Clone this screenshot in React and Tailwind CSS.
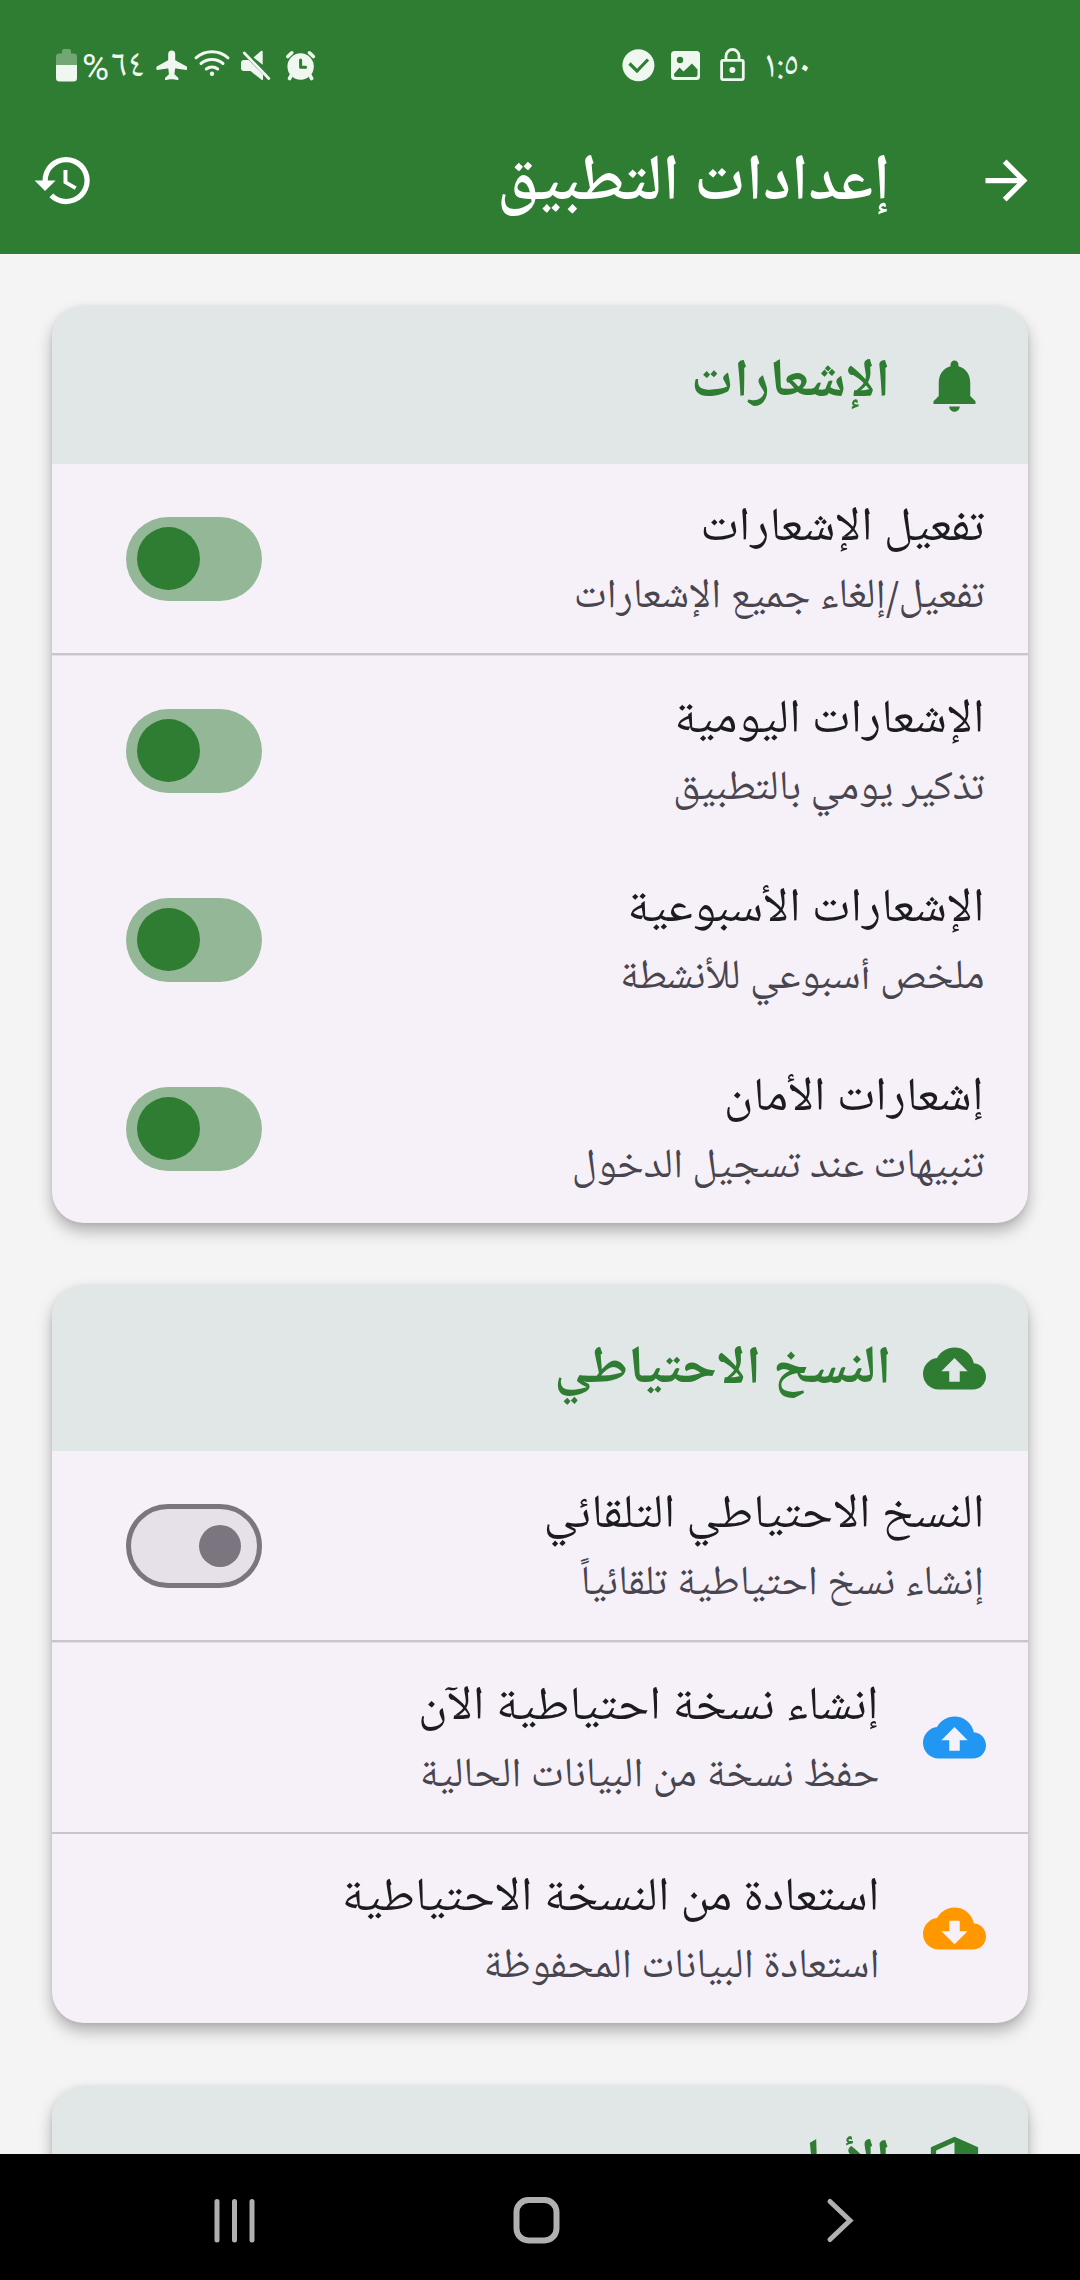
import React from "react";
import {
  MdArrowForward,
  MdHistory,
  MdNotifications,
  MdCloudUpload,
  MdCloudDownload,
  MdSecurity,
} from "react-icons/md";

function StatusBar() {
  return (
    <div dir="ltr" className="flex h-[106px] items-start pt-[46px] text-[#f0f7f0]">
      <svg className="ml-[54px] h-[38px] w-[26px]" viewBox="54 46 26 38" fill="currentColor">
        <path opacity="0.35" d="M62 51q0-2 2-2h5q2 0 2 2v2.600h3q3 0 3 3V65H56v-8.400q0-3 3-3h3z" />
        <path d="M56 65h21v13q0 3.500-3.500 3.500h-14Q56 81.500 56 78z" />
      </svg>
      <span className="ml-[2px] flex w-[66px] items-start gap-[2px] whitespace-nowrap leading-[38px]">
        <span className="pt-[3px] font-['Roboto',sans-serif] text-[37px]">%</span>
        <span className="pt-px font-['Noto_Naskh_Arabic_UI',serif] text-[38.500px]">٦٤</span>
      </span>
      <svg className="ml-[6px] h-[38px] w-[36px]" viewBox="154 46 36 38" fill="currentColor" stroke="currentColor" strokeWidth="1.400" strokeLinejoin="round">
        <path d="M168.900 54q0-2.800 2.800-2.800t2.800 2.800v6.500l11.800 6.500v2.200l-11.800-1.600-.8 7 4 3.600v1.200l-6-1.200-6 1.200v-1.200l4-3.600-.8-7-11.800 1.600v-2.200l11.800-6.500z" />
      </svg>
      <svg className="ml-[2px] h-[38px] w-[40px]" viewBox="192 46 40 38" fill="none" stroke="currentColor" strokeWidth="3" strokeLinecap="round">
        <path d="M196 57.800a24 24 0 0 1 32 0M201 63.500a17 17 0 0 1 22 0M206.300 69a9.500 9.500 0 0 1 11.400 0" />
        <circle cx="212" cy="73.700" r="2.200" fill="currentColor" stroke="none" />
      </svg>
      <svg className="ml-[7px] h-[38px] w-[34px]" viewBox="239 46 34 38" fill="currentColor">
        <path d="M241 63q0-3 3-3h4.500L263 74.500V79q0 1.600-1.500.8L250.500 71H244q-3 0-3-3zM253.500 57.500l7.500-6.500q1.700-1 1.700 1v12.800z" />
        <path d="M244.300 53l24.500 25.500" fill="none" stroke="currentColor" strokeWidth="2.800" strokeLinecap="round" />
      </svg>
      <svg className="ml-[11px] h-[38px] w-[34px]" viewBox="284 46 34 38" fill="none" stroke="currentColor" strokeWidth="3.600" strokeLinecap="round">
        <circle cx="300.600" cy="66.500" r="13.200" fill="currentColor" stroke="none" />
        <path d="M287.800 56.500l4-3.700M313.400 56.500l-4-3.700M291.500 75l-2 3.500M309.700 75l2 3.500" />
        <path d="M300.600 60v7.200h5" stroke="#2e7d32" strokeWidth="3" strokeLinejoin="round" />
      </svg>
      <svg className="ml-[302px] h-[38px] w-[36px]" viewBox="620 46 36 38" fill="none">
        <circle cx="638.400" cy="65.300" r="16" fill="currentColor" />
        <path d="M629.500 63.500l7.500 7.500 11-11.500" stroke="#2e7d32" strokeWidth="3.200" />
      </svg>
      <svg className="ml-[13px] h-[38px] w-[34px]" viewBox="669 46 34 38" fill="currentColor">
        <rect x="671" y="51" width="29" height="29" rx="3.500" />
        <circle cx="680" cy="60" r="3.200" fill="#2e7d32" />
        <path d="M674 74l5.500-6.500 4 4 8.500-8 5.500 6V75q0 2-2 2H676q-2 0-2-2z" fill="#2e7d32" />
      </svg>
      <svg className="ml-[15px] h-[38px] w-[29px]" viewBox="718 46 29 38" fill="none" stroke="currentColor" strokeWidth="2.800">
        <rect x="721.600" y="60.400" width="21.700" height="19.200" rx="1.500" />
        <path d="M726 60v-4a6.500 6.500 0 0 1 13 0v4" />
        <circle cx="732.400" cy="70" r="3" fill="currentColor" stroke="none" />
      </svg>
      <span className="ml-[17px] whitespace-nowrap pt-[2px] font-['Noto_Naskh_Arabic_UI',serif] text-[38.500px] leading-[38px]">١:٥٠</span>
    </div>
  );
}

function TopBar() {
  return (
    <div className="flex h-[148px] items-center justify-between px-[32px]">
      <div className="flex items-center gap-[84px] pr-[10px]">
        <MdArrowForward className="size-[63px] text-white" />
        <h1 className="whitespace-nowrap pt-[6px] text-[65px] font-semibold leading-[84px] text-white">إعدادات التطبيق</h1>
      </div>
      <MdHistory className="size-[63px] text-white" />
    </div>
  );
}

function Toggle({ on }) {
  return on ? (
    <div className="flex h-[84px] w-[136px] items-center justify-end rounded-full bg-[#94b897] pl-[10.500px]">
      <div className="size-[63px] rounded-full bg-[#2e7d32]" />
    </div>
  ) : (
    <div className="flex h-[84px] w-[136px] items-center rounded-full border-[5.250px] border-[#7a757f] bg-[#e6e0e9] pr-[15.750px]">
      <div className="size-[42px] rounded-full bg-[#7a757f]" />
    </div>
  );
}

function Row({ icon, title, sub, toggle }) {
  return (
    <div className="flex h-[189px] items-center pl-[74px] pr-[42.500px]">
      {icon && <div className="ml-[42px]">{icon}</div>}
      <div className="flex flex-1 flex-col pr-px pt-[9px]">
        <span className="origin-right scale-x-[1.050] whitespace-nowrap text-[47.300px] leading-[69px] text-[#1d1b20]">{title}</span>
        <span className="origin-right scale-x-[1.024] whitespace-nowrap text-[41.400px] leading-[71px] text-[#49454f]">{sub}</span>
      </div>
      {toggle && <Toggle on={toggle === "on"} />}
    </div>
  );
}

function Divider() {
  return <div className="h-[3px] border-t-2 border-[#cac4d0] bg-[#e2dde6]" />;
}

function Card({ icon, title, tall, children }) {
  return (
    <section className="mx-[52px] shrink-0 overflow-hidden rounded-[31.500px] bg-[#f6f1f9] shadow-[0_8px_15px_rgba(0,0,0,0.28),0_1px_4px_rgba(0,0,0,0.08)]">
      <div className={"flex items-center gap-[31.500px] bg-[#e1e6e6] px-[42.500px] text-[#2e7d32] " + (tall ? "h-[166px]" : "h-[158px]")}>
        {icon}
        <h2 className={"origin-right scale-x-[1.005] whitespace-nowrap text-[53.200px] font-bold leading-[70px] " + (tall ? "pt-[4px]" : "pb-[4px]")}>{title}</h2>
      </div>
      {children}
    </section>
  );
}

function NavBar() {
  return (
    <div dir="ltr" className="flex h-[126px] shrink-0 items-center bg-black pt-[6px] text-[#b0b0b0]">
      <svg className="ml-[210px] h-[50px] w-[50px]" viewBox="210 2195 50 50" stroke="currentColor" strokeWidth="5" strokeLinecap="round">
        <path d="M217 2201.500v38.500M234.500 2201.500v38.500M252 2201.500v38.500" />
      </svg>
      <svg className="ml-[251px] h-[50px] w-[52px]" viewBox="511 2195 52 50" fill="none" stroke="currentColor" strokeWidth="6">
        <rect x="516.500" y="2200" width="40" height="40.500" rx="12" />
      </svg>
      <svg className="ml-[262px] h-[50px] w-[32px]" viewBox="825 2195 32 50" fill="none" stroke="currentColor" strokeWidth="5" strokeLinecap="round" strokeLinejoin="miter">
        <path d="M830 2201.500l20 19-20 19" />
      </svg>
    </div>
  );
}

export default function App() {
  const ic = "size-[63px] shrink-0";
  return (
    <div dir="rtl" className="flex h-[2280px] w-[1080px] flex-col overflow-hidden bg-[#f4f4f4] font-['Noto_Naskh_Arabic_UI','Noto_Naskh_Arabic',serif]">
      <header className="h-[254px] shrink-0 bg-[#2e7d32]">
        <StatusBar />
        <TopBar />
      </header>
      <main className="flex min-h-0 flex-1 flex-col gap-[62px] overflow-hidden pt-[52px]">
        <Card icon={<MdNotifications className={ic} />} title="الإشعارات">
          <Row title="تفعيل الإشعارات" sub="تفعيل/إلغاء جميع الإشعارات" toggle="on" />
          <Divider />
          <Row title="الإشعارات اليومية" sub="تذكير يومي بالتطبيق" toggle="on" />
          <Row title="الإشعارات الأسبوعية" sub="ملخص أسبوعي للأنشطة" toggle="on" />
          <Row title="إشعارات الأمان" sub="تنبيهات عند تسجيل الدخول" toggle="on" />
        </Card>
        <Card tall icon={<MdCloudUpload className={ic} />} title="النسخ الاحتياطي">
          <Row title="النسخ الاحتياطي التلقائي" sub="إنشاء نسخ احتياطية تلقائياً" toggle="off" />
          <Divider />
          <Row icon={<MdCloudUpload className="size-[63px] text-[#2196f3]" />} title="إنشاء نسخة احتياطية الآن" sub="حفظ نسخة من البيانات الحالية" />
          <div className="h-[2px] bg-[#cac4d0]" />
          <Row icon={<MdCloudDownload className="size-[63px] text-[#ff9800]" />} title="استعادة من النسخة الاحتياطية" sub="استعادة البيانات المحفوظة" />
        </Card>
        <div className="pt-px">
          <Card icon={<MdSecurity className={ic} />} title="الأمان" />
        </div>
      </main>
      <NavBar />
    </div>
  );
}
